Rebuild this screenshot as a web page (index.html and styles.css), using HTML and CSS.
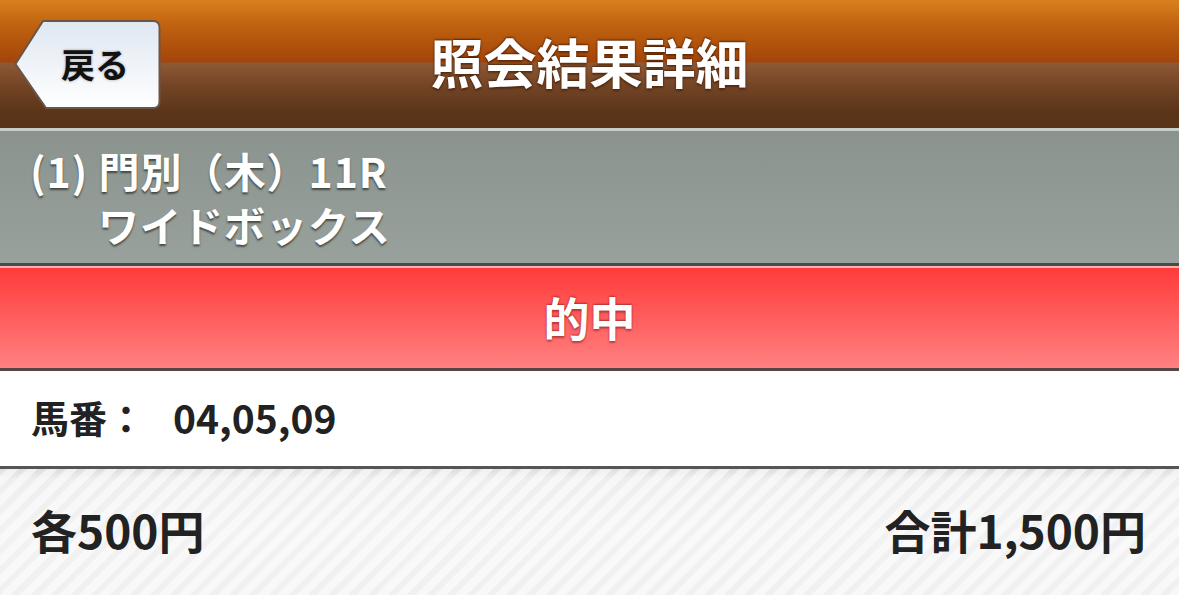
FILE: index.html
```html
<!DOCTYPE html>
<html lang="ja">
<head>
<meta charset="utf-8">
<title>照会結果詳細</title>
<link rel="stylesheet" href="styles.css">
</head>
<body>
<div class="page">
  <header class="topbar">
    <div class="topbar-left">
      <a class="back-btn" href="#">
        <svg class="back-shape" width="148" height="92" viewBox="0 0 148 92">
          <defs>
            <linearGradient id="bg" x1="0" y1="0" x2="0" y2="1">
              <stop offset="0" stop-color="#dfe7f1"/>
              <stop offset="1" stop-color="#ffffff"/>
            </linearGradient>
          </defs>
          <path d="M1.5 45 L29 2 L139 2 Q145.5 2 145.5 8.5 L145.5 82.5 Q145.5 89 139 89 L32 89 Z" fill="url(#bg)" stroke="#6a5648" stroke-width="2"/>
        </svg>
        <span class="back-label">戻る</span>
      </a>
    </div>
    <h1 class="title">照会結果詳細</h1>
    <div class="topbar-right"></div>
  </header>

  <section class="race">
    <div class="race-line1">(1) 門別（木）11R</div>
    <div class="race-line2">ワイドボックス</div>
  </section>

  <section class="result">
    <span class="result-label">的中</span>
  </section>

  <section class="numbers">
    <span class="numbers-label">馬番：</span>
    <span class="numbers-value">04,05,09</span>
  </section>

  <section class="amount">
    <span class="amount-each">各500円</span>
    <span class="amount-total">合計1,500円</span>
  </section>
</div>
</body>
</html>
```

FILE: styles.css
```css
* { box-sizing: border-box; }

html, body {
  margin: 0;
  padding: 0;
}

body {
  width: 1179px;
  height: 595px;
  overflow: hidden;
  font-family: "Noto Sans CJK JP", "Noto Sans", sans-serif;
  font-weight: 700;
  background: #f3f3f3;
}

.page {
  display: flex;
  flex-direction: column;
  height: 595px;
}

.topbar {
  height: 131px;
  display: grid;
  grid-template-columns: 1fr auto 1fr;
  align-items: center;
  background: linear-gradient(to bottom,
    #d9801f 0px,
    #c0620f 25px,
    #a3450a 62px,
    #8e5935 63px,
    #744526 85px,
    #5c3519 112px,
    #5a3418 127px,
    #3e3a36 127px,
    #3e3a36 128px,
    #c6cdca 128px,
    #c6cdca 131px);
  padding-bottom: 3px;
}

.topbar-left {
  display: flex;
  align-items: center;
  padding-left: 14px;
  padding-top: 1px;
}

.back-btn {
  position: relative;
  display: flex;
  align-items: center;
  justify-content: center;
  width: 148px;
  height: 92px;
  padding-left: 14px;
  text-decoration: none;
  color: #111;
}

.back-shape {
  position: absolute;
  left: 0;
  top: 0;
}

.back-label {
  position: relative;
  font-size: 34px;
  line-height: 1;
  color: #111;
  text-shadow: 0 0 3px rgba(0,0,0,0.35);
  margin-top: -2px;
}

.title {
  margin: 0;
  font-size: 53px;
  font-weight: 700;
  color: #ffffff;
  line-height: 1;
  letter-spacing: 0;
  text-shadow: 0 -1px 2px rgba(60,25,5,0.8), 0 2px 2px rgba(60,25,5,0.6);
  margin-top: -6px;
}

.race {
  height: 135px;
  padding: 14px 0 0 30px;
  background: linear-gradient(to bottom, #8b938e 0px, #98a19c 132px, #464c4a 132px, #464c4a 135px);
  color: #ffffff;
  font-size: 41px;
  line-height: 50px;
  letter-spacing: 1px;
  text-shadow: 0 2px 2px rgba(40,45,42,0.75);
}

.race-line1 {
  height: 50px;
}

.race-line2 {
  padding-left: 68px;
  margin-top: 4px;
}

.result {
  height: 105px;
  display: flex;
  align-items: center;
  justify-content: center;
  background: linear-gradient(to bottom,
    #ffb3b3 0px, #ffb3b3 2px,
    #ff3b3b 2px,
    #ff8181 102px,
    #574545 102px, #574545 105px);
}

.result-label {
  font-size: 46px;
  color: #ffffff;
  line-height: 1;
  text-shadow: 0 -1px 2px rgba(120,20,20,0.6), 0 2px 2px rgba(120,20,20,0.5);
  margin-top: -6px;
}

.numbers {
  height: 98px;
  display: flex;
  align-items: center;
  padding-left: 31px;
  padding-bottom: 3px;
  background: #ffffff;
  border-bottom: 3px solid #555555;
  color: #222222;
  font-size: 38px;
  line-height: 1;
}

.numbers-label {
  margin-right: 28px;
}

.numbers-value {
  font-size: 39px;
}

.amount {
  flex: 1;
  display: flex;
  align-items: center;
  justify-content: space-between;
  padding: 0 33px 6px 31px;
  color: #222222;
  font-size: 46px;
  line-height: 1;
  background:
    repeating-linear-gradient(-45deg,
      rgba(255,255,255,0.55) 0px,
      rgba(255,255,255,0.55) 7px,
      rgba(255,255,255,0) 9px,
      rgba(255,255,255,0) 14px),
    linear-gradient(to bottom, #dedede 0px, #eeeeee 10px, #f2f2f2 60px, #f0f0f0 126px);
}
```
